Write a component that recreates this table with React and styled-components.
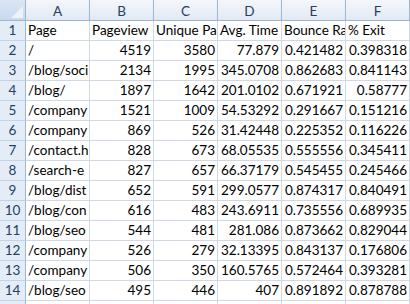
import styled, { createGlobalStyle } from "styled-components";

const GlobalStyle = createGlobalStyle`
  html, body {
    margin: 0;
    padding: 0;
    background: #ffffff;
    overflow: hidden;
  }
`;

const columns = ["A", "B", "C", "D", "E", "F"];

// text as it shows in the narrow cells (the neighbouring cell cuts it off)
const rows = [
  ["Page", "Pageview", "Unique Pa", "Avg. Time", "Bounce Ra", "% Exit"],
  ["/", 4519, 3580, 77.879, 0.421482, 0.398318],
  ["/blog/soci", 2134, 1995, 345.0708, 0.862683, 0.841143],
  ["/blog/", 1897, 1642, 201.0102, 0.671921, 0.58777],
  ["/company", 1521, 1009, 54.53292, 0.291667, 0.151216],
  ["/company", 869, 526, 31.42448, 0.225352, 0.116226],
  ["/contact.h", 828, 673, 68.05535, 0.555556, 0.345411],
  ["/search-e", 827, 657, 66.37179, 0.545455, 0.245466],
  ["/blog/dist", 652, 591, 299.0577, 0.874317, 0.840491],
  ["/blog/con", 616, 483, 243.6911, 0.735556, 0.689935],
  ["/blog/seo", 544, 481, 281.086, 0.873662, 0.829044],
  ["/company", 526, 279, 32.13395, 0.843137, 0.176806],
  ["/company", 506, 350, 160.5765, 0.572464, 0.393281],
  ["/blog/seo", 495, 446, 407, 0.891892, 0.878788],
];

const Sheet = styled.div`
  display: grid;
  grid-template-columns: 26px repeat(6, 64px);
  grid-template-rows: 21px;
  grid-auto-rows: 20px;
  width: 410px;
  height: 304px;
  overflow: hidden;
  font-family: Lato, "Open Sans", sans-serif;
  font-size: 13.5px;
  color: #000000;
`;

const Corner = styled.div`
  position: relative;
  box-sizing: border-box;
  background: linear-gradient(#dbe6f4, #c9d9ee);
  border-right: 1px solid #9eb6ce;
  border-bottom: 1px solid #9eb6ce;

  &::after {
    content: "";
    position: absolute;
    right: 2px;
    bottom: 2px;
    width: 0;
    height: 0;
    border-style: solid;
    border-width: 0 0 12px 12px;
    border-color: transparent transparent #eef3fa transparent;
  }
`;

const ColHeader = styled.div`
  box-sizing: border-box;
  display: flex;
  align-items: center;
  justify-content: center;
  padding-top: 1px;
  background: linear-gradient(#f4f7fb, #e2e9f3);
  border-right: 1px solid #9eb6ce;
  border-bottom: 1px solid #9eb6ce;
  color: #243f60;
`;

const RowHeader = styled.div`
  box-sizing: border-box;
  display: flex;
  align-items: flex-end;
  justify-content: center;
  padding-bottom: 2px;
  line-height: 15px;
  background: #e4ecf7;
  border-right: 1px solid #9eb6ce;
  border-bottom: 1px solid #c5d3e6;
  color: #243f60;
`;

const Cell = styled.div`
  box-sizing: border-box;
  display: flex;
  align-items: flex-end;
  justify-content: ${(p) => (p.$num ? "flex-end" : "flex-start")};
  padding: 0 2px 2px 2px;
  line-height: 15px;
  white-space: nowrap;
  overflow: hidden;
  border-right: 1px solid #d0d7e5;
  border-bottom: 1px solid #d0d7e5;
`;

const App = () => {
  return (
    <>
      <GlobalStyle />
      <Sheet>
        <Corner />
        {columns.map((c) => (
          <ColHeader key={c}>{c}</ColHeader>
        ))}
        {rows.map((row, i) => [
          <RowHeader key={`h${i}`}>{i + 1}</RowHeader>,
          ...row.map((value, j) => (
            <Cell key={`c${i}-${j}`} $num={typeof value === "number"}>
              {value}
            </Cell>
          )),
        ])}
        <RowHeader />
        {columns.map((c) => (
          <Cell key={`e${c}`} />
        ))}
      </Sheet>
    </>
  );
};

export default App;
